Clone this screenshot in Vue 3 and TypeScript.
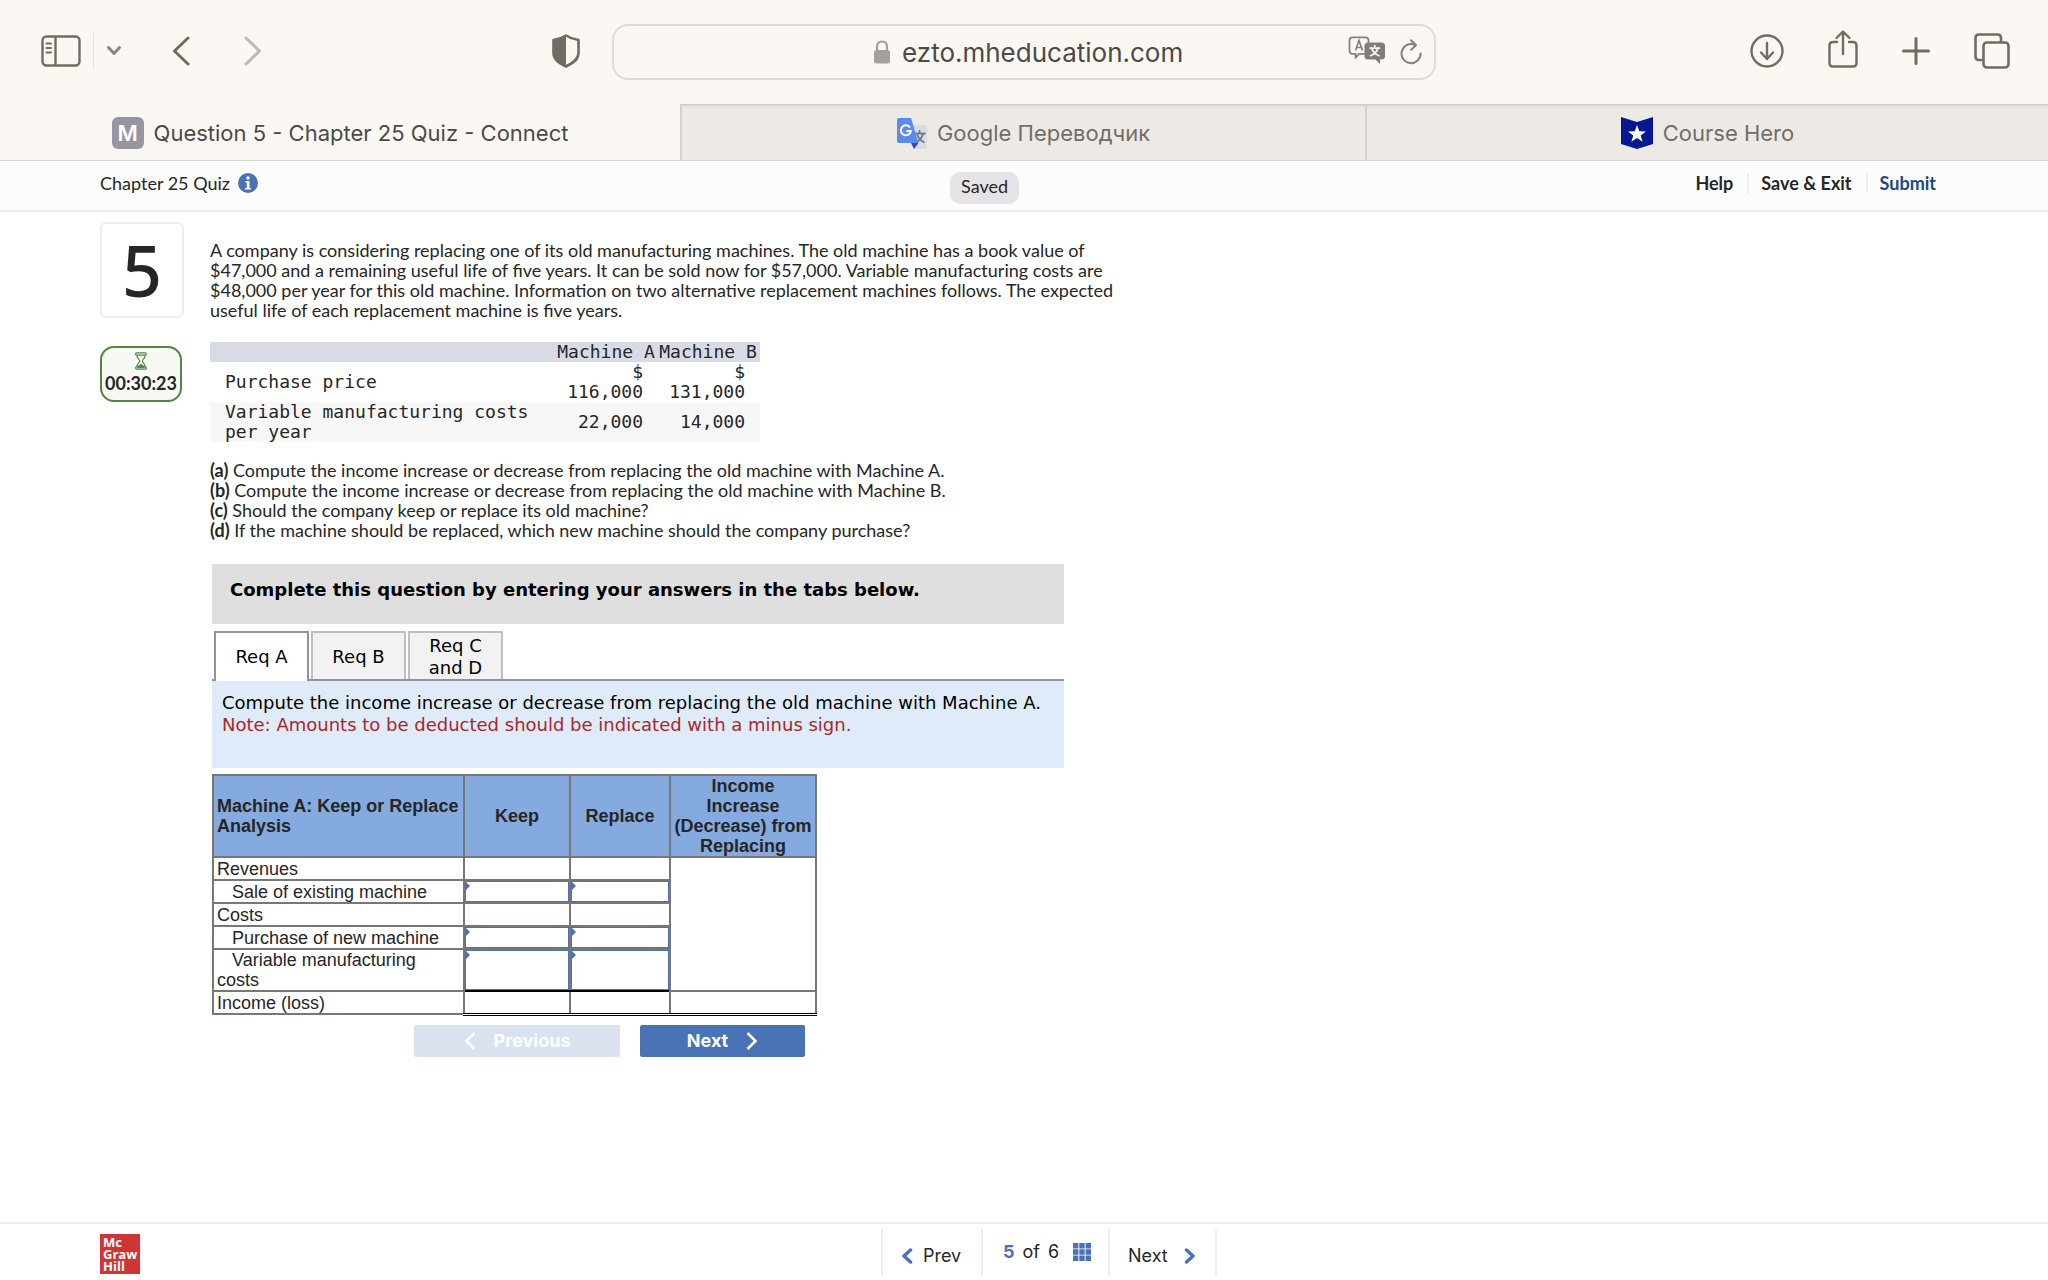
<script setup lang="ts">
import { ref } from 'vue'

interface AnswerRow {
  id: string
  label: string
  indent?: boolean
  editable?: boolean
  tall?: boolean
}

const url = ref('ezto.mheducation.com')
const rows: AnswerRow[] = [
  { id: 'revenues', label: 'Revenues' },
  { id: 'sale', label: 'Sale of existing machine', indent: true, editable: true },
  { id: 'costs', label: 'Costs' },
  { id: 'purchase', label: 'Purchase of new machine', indent: true, editable: true },
  { id: 'variable', label: 'Variable manufacturing costs', indent: true, editable: true, tall: true },
]
const answers = ref<Record<string, string>>({})
</script>

<template>
  <div class="window">
    <header class="toolbar">
      <div class="tools-left">
        <button class="icon sidebar" aria-label="Show sidebar">
          <svg width="40" height="32" viewBox="0 0 40 32" fill="none" stroke="#706c64" stroke-width="2.4">
            <rect x="1.5" y="1.5" width="37" height="29" rx="4" />
            <path d="M14.5 2v28" />
            <path d="M5.5 8.500h4.500M5.500 13h4.500M5.500 17.500h4.500" stroke-width="2" stroke-linecap="round" />
          </svg>
        </button>
        <span class="tool-divider"></span>
        <button class="icon menu" aria-label="Tab groups">
          <svg width="16" height="12" viewBox="0 0 16 12" fill="none" stroke="#8a8781" stroke-width="3" stroke-linecap="round" stroke-linejoin="round"><path d="M2.500 2.500 8 8.500l5.500-6" /></svg>
        </button>
        <button class="icon back" aria-label="Back">
          <svg width="18" height="30" viewBox="0 0 18 30" fill="none" stroke="#706c64" stroke-width="3" stroke-linecap="round" stroke-linejoin="round"><path d="M16 2 2.500 15 16 28" /></svg>
        </button>
        <button class="icon forward" aria-label="Forward">
          <svg width="18" height="30" viewBox="0 0 18 30" fill="none" stroke="#bdb9b2" stroke-width="3" stroke-linecap="round" stroke-linejoin="round"><path d="M2 2l13.500 13L2 28" /></svg>
        </button>
        <button class="icon shield" aria-label="Privacy report">
          <svg width="28" height="34" viewBox="0 0 28 34">
            <path d="M14 1.500c3.500 2.300 7.500 3.700 12.500 4.500v13c0 6-4.500 9.500-12.500 13.500C6 28.500 1.500 25 1.500 19V6C6.500 5.200 10.500 3.800 14 1.500z" fill="none" stroke="#706c64" stroke-width="2.600" stroke-linejoin="round" />
            <path d="M14 1.500v31C6 28.500 1.500 25 1.500 19V6C6.500 5.200 10.500 3.800 14 1.500z" fill="#706c64" />
          </svg>
        </button>
      </div>
      <div class="address">
        <div class="address-main">
          <svg width="16" height="24" viewBox="0 0 16 24">
            <rect x="0" y="10" width="16" height="13.500" rx="2.500" fill="#a3a19d" />
            <path d="M3 11V6.500C3 3.200 5 1.500 8 1.500s5 1.700 5 5V11" fill="none" stroke="#a3a19d" stroke-width="2.200" />
          </svg>
          <input v-model="url" class="url" aria-label="Address" />
        </div>
        <button class="icon translate" aria-label="Translate">
          <svg width="38" height="28" viewBox="0 0 38 28">
            <path d="M4.500 1.300h13q3 0 3 3v10.500q0 3-3 3H11l-3.500 4v-4h-3q-3 0-3-3V4.300q0-3 3-3z" fill="#fbf8f3" stroke="#85827e" stroke-width="1.800" stroke-linejoin="round" />
            <path d="M7.500 14.500 11 4.500l3.500 10M8.500 11.500h5" fill="none" stroke="#85827e" stroke-width="1.700" />
            <path d="M20 6.500h13.500q3.500 0 3.500 3.500v10q0 3.500-3.500 3.500H32V28l-4.500-4.500H20q-3.500 0-3.500-3.500V10q0-3.500 3.500-3.500z" fill="#817e7a" />
            <path d="M26.800 9v3M21.500 12.200h10.600M29.800 12.500c-1 3.500-3.800 6-7.800 7.500M23.800 12.500c1 3.500 3.800 6 7.800 7.500" fill="none" stroke="#fbf8f3" stroke-width="1.700" />
          </svg>
        </button>
        <button class="icon" aria-label="Reload">
          <svg width="22" height="26" viewBox="0 0 22 26" fill="none" stroke="#85827e" stroke-width="2" stroke-linecap="round" stroke-linejoin="round">
            <path d="M14.500 5.800A9.500 9.500 0 1 0 20.500 14.500" />
            <path d="M11 1.200l5 5-4.800 4.600" />
          </svg>
        </button>
      </div>
      <div class="tools-right">
        <button class="icon" aria-label="Downloads">
          <svg width="34" height="34" viewBox="0 0 34 34" fill="none" stroke="#706c64" stroke-width="2.400" stroke-linecap="round" stroke-linejoin="round"><circle cx="17" cy="17" r="15.500" /><path d="M17 9v16M11 18.500l6 6.500 6-6.500" /></svg>
        </button>
        <button class="icon" aria-label="Share">
          <svg class="share" width="30" height="38" viewBox="0 0 30 38" fill="none" stroke="#706c64" stroke-width="2.400" stroke-linecap="round" stroke-linejoin="round"><path d="M9 12H5q-3.500 0-3.500 3.500v17.500q0 3.500 3.500 3.500h20q3.500 0 3.500-3.500V15.500Q28.500 12 25 12h-4" /><path d="M15 24V1.800M8.500 8 15 1.500 21.500 8" /></svg>
        </button>
        <button class="icon" aria-label="New tab">
          <svg width="28" height="28" viewBox="0 0 28 28" fill="none" stroke="#706c64" stroke-width="3" stroke-linecap="round"><path d="M14 1.500v25M1.500 14h25" /></svg>
        </button>
        <button class="icon" aria-label="Tab overview">
          <svg width="36" height="36" viewBox="0 0 36 36" fill="none" stroke="#706c64" stroke-width="2.600" stroke-linejoin="round"><path d="M8.500 27H5q-3.500 0-3.500-3.500V5Q1.500 1.500 5 1.500h18.500Q27 1.500 27 5v4" /><rect x="9.500" y="9.500" width="25" height="25" rx="3.500" /></svg>
        </button>
      </div>
    </header>

    <nav class="tabs" aria-label="Browser tabs">
      <a href="#quiz" class="tab current"><span class="m-badge">M</span>Question 5 - Chapter 25 Quiz - Connect</a>
      <a href="#translate" class="tab">
        <svg width="30" height="32" viewBox="0 0 30 32">
          <path d="M14 8h14q2 0 2 2v20q0 2-2 2H17z" fill="#dadde0" />
          <path d="M22.500 13v3M17.500 16.500h11M26 16.800c-1 4-3.500 7-7.500 9M20 17c1 3.500 3.500 6.500 7.500 8.500" fill="none" stroke="#6d7b86" stroke-width="1.800" />
          <path d="M14 26h7.500L17 32z" fill="#3545b5" />
          <path d="M2 1h12l7.500 25H2q-2 0-2-2V3q0-2 2-2z" fill="#5a8bee" />
          <path d="M13 10.500A5 5 0 1 0 13.800 14H9.500" fill="none" stroke="#fff" stroke-width="2" />
        </svg>
        Google Переводчик
      </a>
      <a href="#hero" class="tab">
        <svg width="32" height="32" viewBox="0 0 32 32">
          <path d="M0 0l16 5L32 0v27l-16 5-16-5z" fill="#061793" />
          <path d="M16 8l2.300 6.200 6.700.2-5.300 4 1.900 6.400L16 21l-5.600 3.800 1.900-6.400-5.300-4 6.700-.2z" fill="#fff" />
        </svg>
        Course Hero
      </a>
    </nav>

    <div class="quiz-bar">
      <div class="quiz-name">
        Chapter 25 Quiz
        <svg width="20" height="20" viewBox="0 0 20 20"><circle cx="10" cy="10" r="10" fill="#4973b5" /><circle cx="10" cy="5" r="1.700" fill="#fff" /><path d="M7.500 8h4v7h1.500v1.500h-6V15h1.800V9.500H7.500z" fill="#fff" /></svg>
      </div>
      <span class="saved">Saved</span>
      <div class="quiz-actions">
        <a href="#help">Help</a>
        <a href="#exit">Save &amp; Exit</a>
        <a href="#submit" class="submit">Submit</a>
      </div>
    </div>

    <main class="page">
      <aside class="side">
        <div class="number">5</div>
        <div class="timer">
          <svg width="14" height="18" viewBox="0 0 14 20" fill="none" stroke="#518643" stroke-width="1.300">
            <path d="M2 1h10q1 0 1 1.200T12 3.500H2Q1 3.500 1 2.200T2 1zM2 16.500h10q1 0 1 1.200T12 19H2q-1 0-1-1.300t1-1.200zM2.500 3.500c0 4 3 4.500 3 6.500s-3 2.500-3 6.500M11.500 3.500c0 4-3 4.500-3 6.500s3 2.500 3 6.500" />
            <path d="M3 18v-2l4-3 4 3v2z" fill="#518643" stroke="none" />
          </svg>
          <span>00:30:23</span>
        </div>
      </aside>

      <article class="question">
        <p class="prose">
          A company is considering replacing one of its old manufacturing machines. The old machine has a book value of<br />
          $47,000 and a remaining useful life of five years. It can be sold now for $57,000. Variable manufacturing costs are<br />
          $48,000 per year for this old machine. Information on two alternative replacement machines follows. The expected<br />
          useful life of each replacement machine is five years.
        </p>

        <table class="facts">
          <thead>
            <tr><th class="fact-name"></th><th>Machine A</th><th>Machine B</th></tr>
          </thead>
          <tbody>
            <tr><td>Purchase price</td><td>$ 116,000</td><td>$ 131,000</td></tr>
            <tr class="shaded"><td>Variable manufacturing costs per year</td><td>22,000</td><td>14,000</td></tr>
          </tbody>
        </table>

        <p class="prose">
          <b>(a)</b> Compute the income increase or decrease from replacing the old machine with Machine A.<br />
          <b>(b)</b> Compute the income increase or decrease from replacing the old machine with Machine B.<br />
          <b>(c)</b> Should the company keep or replace its old machine?<br />
          <b>(d)</b> If the machine should be replaced, which new machine should the company purchase?
        </p>

        <section class="worksheet">
          <h2 class="banner">Complete this question by entering your answers in the tabs below.</h2>
          <div class="req-tabs" role="tablist">
            <button role="tab" class="req active" aria-selected="true">Req A</button>
            <button role="tab" class="req">Req B</button>
            <button role="tab" class="req">Req C<br />and D</button>
          </div>
          <div class="instructions">
            <p>Compute the income increase or decrease from replacing the old machine with Machine A.</p>
            <p class="note">Note: Amounts to be deducted should be indicated with a minus sign.</p>
          </div>

          <table class="answers">
            <colgroup><col class="c1" /><col class="c2" /><col class="c3" /><col class="c4" /></colgroup>
            <thead>
              <tr>
                <th class="left">Machine A: Keep or Replace Analysis</th>
                <th>Keep</th>
                <th>Replace</th>
                <th>Income Increase (Decrease) from Replacing</th>
              </tr>
            </thead>
            <tbody>
              <tr v-for="(row, i) in rows" :key="row.id">
                <td :class="{ indent: row.indent }">{{ row.label }}</td>
                <td v-for="col in ['Keep', 'Replace']" :key="col" class="cell" :class="{ editable: row.editable, total: row.tall }">
                  <input v-if="row.editable" v-model="answers[row.id + col]" :class="{ tall: row.tall }" :aria-label="row.label + ', ' + col" />
                </td>
                <td v-if="i === 0" :rowspan="rows.length"></td>
              </tr>
              <tr>
                <td>Income (loss)</td>
                <td class="sum"></td>
                <td class="sum"></td>
                <td class="sum"></td>
              </tr>
            </tbody>
          </table>

          <div class="steps">
            <button class="step previous" disabled>
              <svg width="12" height="18" viewBox="0 0 12 18" fill="none" stroke="#fff" stroke-width="2.500"><path d="M10.500 1 2.500 9l8 8" /></svg>
              Previous
            </button>
            <button class="step next">
              Next
              <svg width="12" height="18" viewBox="0 0 12 18" fill="none" stroke="#fff" stroke-width="2.500"><path d="M1.500 1l8 8-8 8" /></svg>
            </button>
          </div>
        </section>
      </article>
    </main>

    <footer class="footer">
      <div class="logo">Mc<br />Graw<br />Hill</div>
      <nav class="pager" aria-label="Questions">
        <button class="page-link prev">
          <svg width="12" height="16" viewBox="0 0 12 16" fill="none" stroke="#4973b5" stroke-width="3.500" stroke-linecap="round" stroke-linejoin="round"><path d="M9.500 2 3 8l6.500 6" /></svg>
          Prev
        </button>
        <div class="position">
          <b>5</b><span>of</span><span>6</span>
          <svg width="18" height="18" viewBox="0 0 18 18" fill="#4973b5"><path d="M0 0h5.400v5.400H0zM6.300 0h5.400v5.400H6.300zM12.600 0H18v5.400h-5.400zM0 6.300h5.400v5.400H0zM6.300 6.300h5.400v5.400H6.300zM12.600 6.300H18v5.400h-5.400zM0 12.600h5.400V18H0zM6.300 12.600h5.400V18H6.300zM12.600 12.600H18V18h-5.400z" /></svg>
        </div>
        <button class="page-link nxt">
          Next
          <svg width="12" height="16" viewBox="0 0 12 16" fill="none" stroke="#4973b5" stroke-width="3.500" stroke-linecap="round" stroke-linejoin="round"><path d="M2.500 2 9 8l-6.500 6" /></svg>
        </button>
      </nav>
    </footer>
  </div>
</template>

<style>
body {
  margin: 0;
  background: #fff;
}
</style>

<style scoped>
* {
  box-sizing: border-box;
}
svg {
  display: block;
  flex: none;
}
button {
  font: inherit;
  color: inherit;
  cursor: pointer;
}
a {
  color: inherit;
  text-decoration: none;
}
.window {
  display: flex;
  flex-direction: column;
  min-height: 100vh;
  font-family: Lato, "Open Sans", sans-serif;
  font-size: 18px;
  line-height: 20px;
  color: #262626;
}

.toolbar {
  display: grid;
  grid-template-columns: 1fr 824px 1fr;
  align-items: center;
  height: 104px;
  background: #fbf8f3;
}
.icon {
  display: block;
  padding: 0;
  border: 0;
  background: none;
}
.tools-left {
  display: flex;
  align-items: center;
  padding: 0 0 2px 41px;
}
.tool-divider {
  width: 1px;
  height: 36px;
  margin: 0 12px;
  background: #e6e3de;
}
.back {
  margin-left: 50px;
}
.forward {
  margin-left: 54px;
}
.shield {
  margin: 0 32px 0 auto;
}
.address {
  display: flex;
  align-items: center;
  height: 56px;
  padding-right: 12px;
  border: 2px solid #dfdcd7;
  border-radius: 16px;
}
.address-main {
  display: flex;
  align-items: center;
  gap: 12px;
  padding-left: 260px;
  flex: 1;
}
.url {
  flex: 1;
  min-width: 0;
  padding: 0;
  border: 0;
  outline: 0;
  background: none;
  font-family: Inter, sans-serif;
  font-size: 26px;
  color: #4c4a46;
}
.translate {
  margin: 0 14px 4px 0;
}
.tools-right {
  display: flex;
  align-items: center;
  justify-content: flex-end;
  gap: 44px;
  padding: 0 38px 2px 0;
}
.share {
  margin-bottom: 4px;
}

.tabs {
  display: grid;
  grid-template-columns: 680fr 685fr 683fr;
  height: 57px;
  border-bottom: 1px solid #d6d5d3;
  background: #fbf8f3;
  font-family: Inter, sans-serif;
  font-size: 22px;
}
.tab {
  display: flex;
  align-items: center;
  justify-content: center;
  gap: 10px;
  padding-top: 2px;
  border-left: 2px solid #d6d3cf;
  background: linear-gradient(#cbc8c3, #e4e1dc 2px, #edeae5 5px);
  color: #716e69;
  white-space: nowrap;
}
.tab.current {
  border-left: 0;
  background: none;
  color: #4c4a46;
}
.m-badge {
  width: 32px;
  height: 32px;
  border-radius: 6px;
  background: #9696a3;
  color: #fff;
  font-weight: 600;
  line-height: 32px;
  text-align: center;
}

.quiz-bar {
  display: grid;
  grid-template-columns: 850px auto 1fr;
  align-items: start;
  height: 51px;
  padding: 0 112px 0 100px;
  border-bottom: 2px solid #eee;
  background: #fcfcfd;
}
.quiz-name {
  display: flex;
  align-items: center;
  gap: 8px;
  height: 44px;
}
.saved {
  margin-top: 11px;
  padding: 4px 11px 8px;
  border-radius: 10px;
  background: #e6e3e7;
}
.quiz-actions {
  display: flex;
  justify-content: flex-end;
  height: 44px;
  align-items: center;
  font-weight: 700;
}
.quiz-actions a + a {
  margin-left: 14px;
  padding-left: 12px;
  border-left: 2px solid #eee;
}
.quiz-actions .submit {
  color: #234684;
}

.page {
  display: flex;
  align-items: flex-start;
  gap: 26px;
  padding: 10px 100px 24px;
}
.side {
  width: 84px;
}
.number {
  height: 96px;
  border: 2px solid #eee;
  border-radius: 6px;
  font-family: "Noto Sans", sans-serif;
  font-size: 70px;
  font-weight: 500;
  line-height: 92px;
  text-align: center;
}
.timer {
  display: flex;
  flex-direction: column;
  align-items: center;
  gap: 3px;
  width: 82px;
  height: 56px;
  margin-top: 28px;
  padding-top: 4px;
  border: 2px solid #518643;
  border-radius: 14px;
  background: #f6f9f4;
  font-weight: 700;
}
.question {
  padding-top: 18px;
}
.prose {
  margin: 0 0 22px;
  white-space: nowrap;
}
.facts {
  width: 550px;
  margin-bottom: 18px;
  border-collapse: collapse;
  font-family: "DejaVu Sans Mono", monospace;
  font-size: 18px;
}
.facts th {
  padding: 0 2px 0 0;
  background: #d8dbe5;
  font-weight: 400;
  white-space: nowrap;
}
.facts th:not(.fact-name) {
  width: 102px;
}
.facts td {
  padding: 0 15px 0 0;
  text-align: right;
}
.facts td:first-child {
  padding: 0 15px;
  text-align: left;
}
.shaded {
  background: #f7f7f7;
}

.worksheet {
  width: 852px;
  margin: 24px 0 0 2px;
  font-family: "DejaVu Sans", sans-serif;
  font-size: 18px;
  line-height: 22px;
  color: #000;
}
.banner {
  height: 60px;
  margin: 0;
  padding: 15px 18px;
  background: #dfdfdf;
  font-size: 18px;
  line-height: 22px;
  white-space: nowrap;
}
.req-tabs {
  display: flex;
  gap: 2px;
  padding: 7px 2px 0;
  border-bottom: 2px solid #949494;
}
.req {
  width: 95px;
  height: 48px;
  padding: 2px 0 0;
  border: 2px solid #bfbfbf;
  border-bottom: 0;
  background: #f2f2f2;
}
.req.active {
  height: 50px;
  margin-bottom: -2px;
  padding: 0;
  border-color: #949494;
  background: #fff;
}
.instructions {
  height: 87px;
  padding: 11px 10px;
  background: #dfebf8;
  white-space: nowrap;
}
.instructions p {
  margin: 0;
}
.instructions .note {
  color: #a9272a;
}

.answers {
  width: 605px;
  margin-top: 6px;
  table-layout: fixed;
  border-collapse: collapse;
  font-family: "Liberation Sans", sans-serif;
  font-size: 18px;
  line-height: 20px;
  color: #262626;
}
.c1 {
  width: 251px;
}
.c2 {
  width: 106px;
}
.c3 {
  width: 100px;
}
.c4 {
  width: 146px;
}
.answers th {
  padding: 0 2px;
  border: 2px solid #777;
  background: #84aadf;
}
.answers .left {
  padding-left: 3px;
  text-align: left;
}
.answers td {
  height: 23px;
  padding: 0 3px;
  border: 2px solid #777;
}
.answers .indent {
  text-indent: 15px;
}
.answers .cell {
  position: relative;
  padding: 0;
}
.answers .total {
  border-bottom-color: #000;
}
.answers .sum {
  border-bottom: 3px double #000;
}
.cell input {
  display: block;
  width: 100%;
  height: 21px;
  padding: 0 4px;
  border: 1px solid #4973b5;
  outline: 0;
  font: inherit;
}
.cell input.tall {
  height: 40px;
}
.editable::before {
  content: "";
  position: absolute;
  z-index: 1;
  top: 1px;
  left: 1px;
  border: 4px solid transparent;
  border-left: 4px solid #4973b5;
}

.steps {
  display: flex;
  gap: 20px;
  margin-top: 9px;
  padding-left: 202px;
}
.step {
  display: flex;
  align-items: center;
  justify-content: center;
  gap: 18px;
  height: 32px;
  padding: 0;
  border: 0;
  border-radius: 2px;
  background: #4973b5;
  color: #fff;
  font-family: Inter, sans-serif;
  font-size: 18px;
  font-weight: 700;
}
.previous {
  width: 206px;
  background: #d9e2ee;
}
.next {
  width: 165px;
}

.footer {
  display: grid;
  grid-template-columns: 781px auto;
  justify-content: start;
  height: 58px;
  margin-top: auto;
  padding-left: 100px;
  border-top: 2px solid #eee;
}
.logo {
  width: 40px;
  height: 40px;
  margin-top: 10px;
  padding: 2px 3px;
  background: #d03433;
  color: #fff;
  font-family: "Open Sans", sans-serif;
  font-size: 13px;
  font-weight: 700;
  line-height: 12px;
}
.pager {
  display: flex;
  height: 47px;
  margin-top: 5px;
  border-right: 2px solid #eee;
  font-family: Inter, sans-serif;
  font-size: 18px;
}
.page-link,
.position {
  display: flex;
  align-items: center;
  border: 0;
  border-left: 2px solid #eee;
  background: none;
}
.page-link {
  padding: 7px 18px 0;
}
.prev {
  width: 100px;
  gap: 10px;
}
.position {
  width: 127px;
  gap: 8px;
  padding: 0 0 2px 20px;
}
.position b {
  color: #4973b5;
}
.position svg {
  margin-left: 6px;
}
.nxt {
  width: 107px;
  gap: 16px;
}
</style>
